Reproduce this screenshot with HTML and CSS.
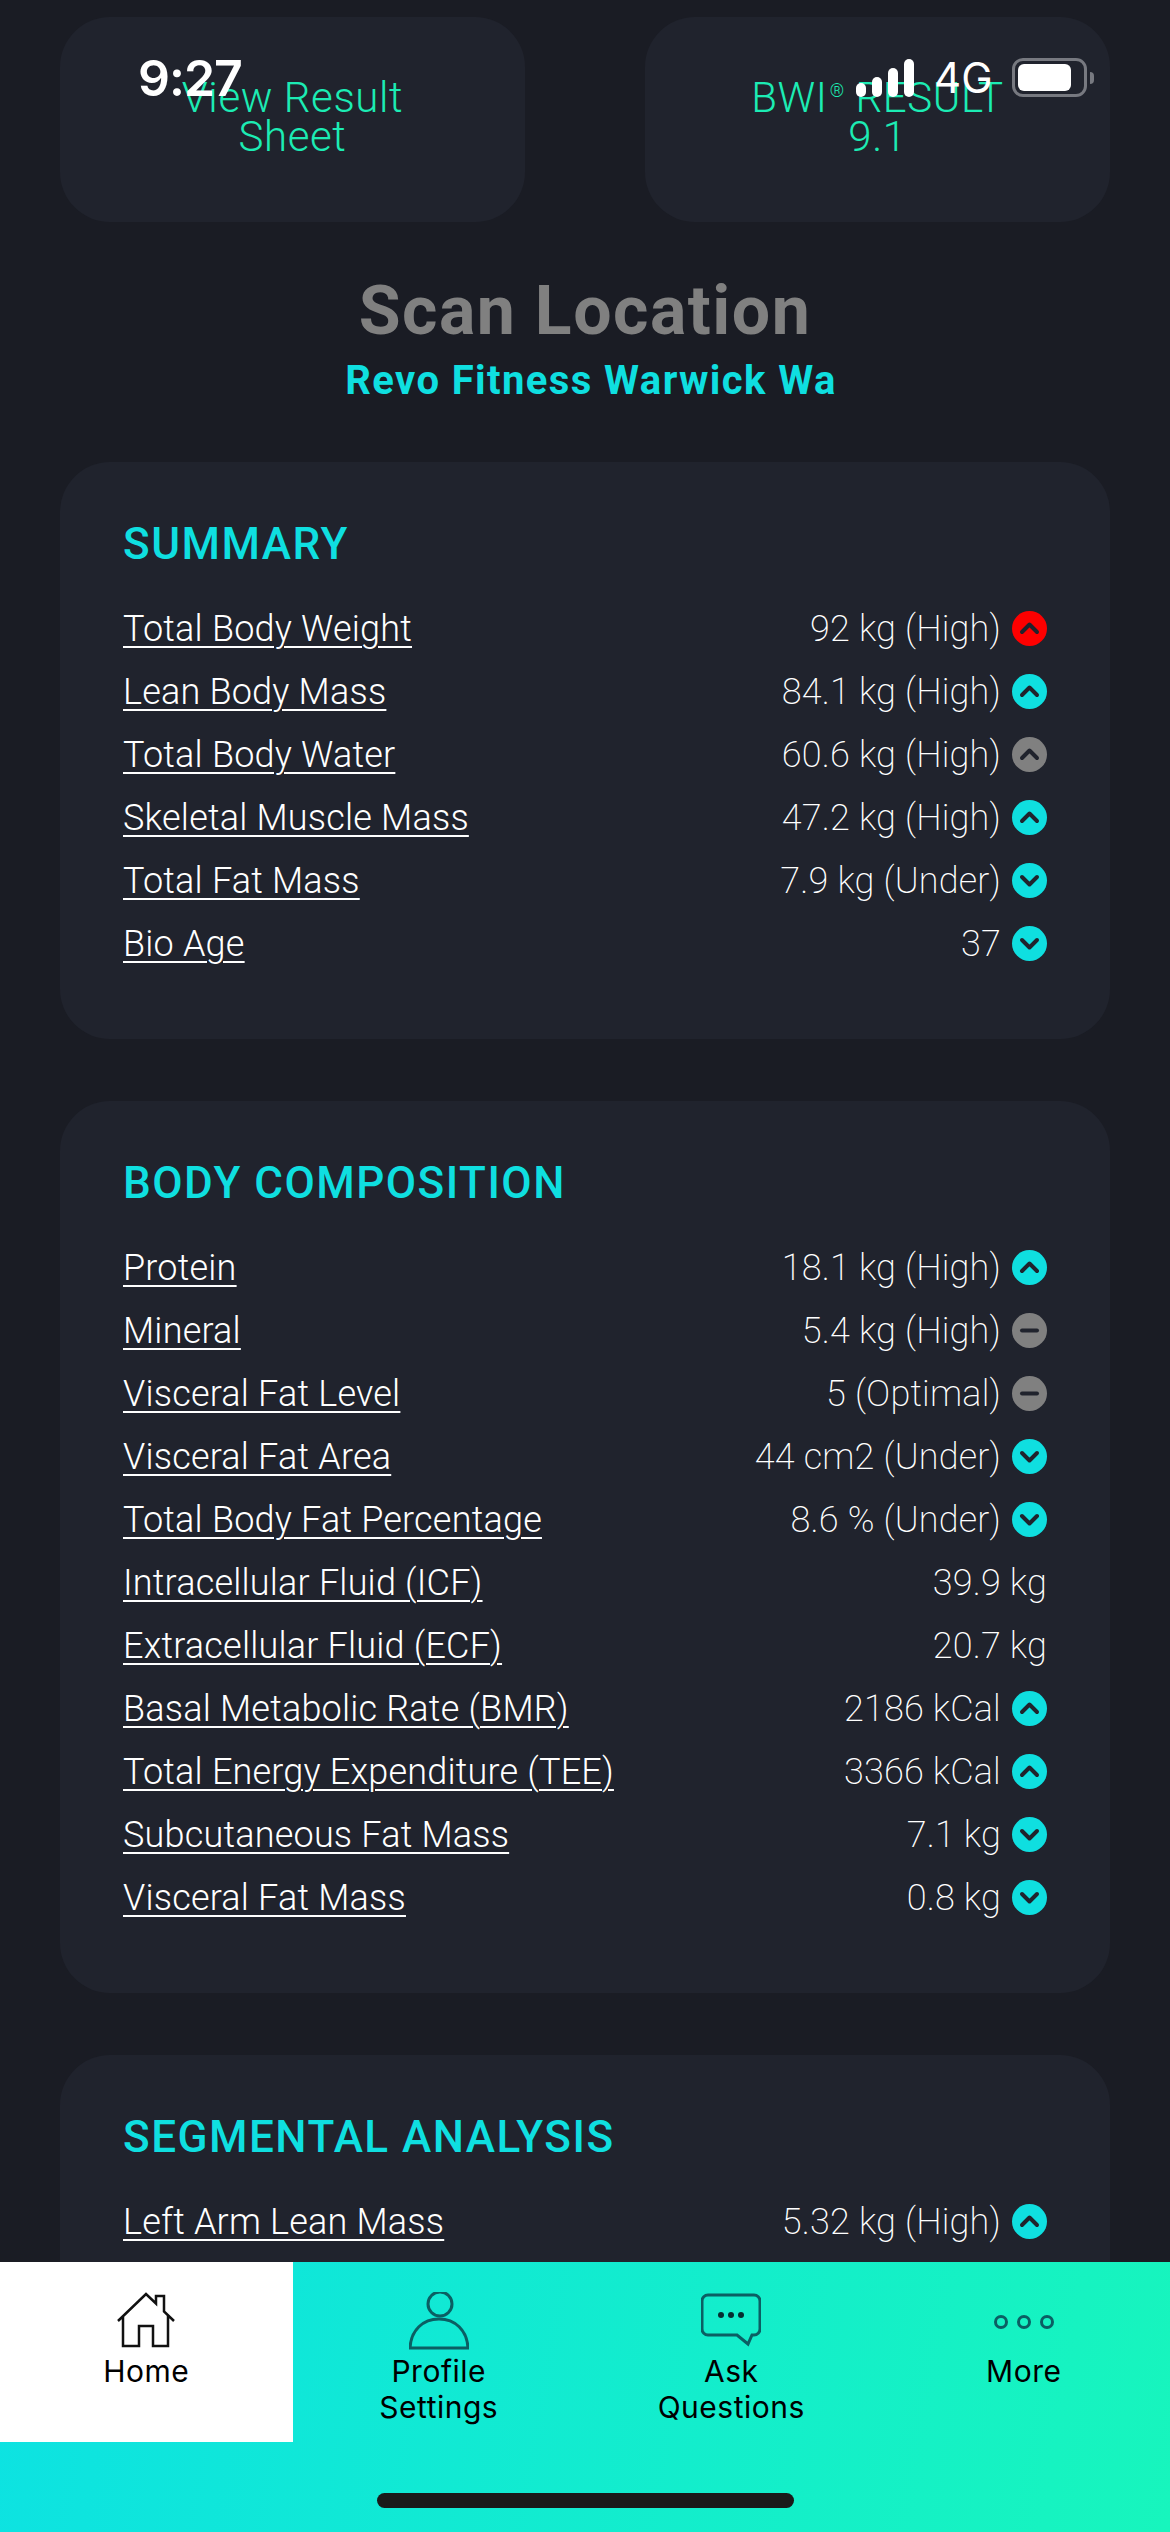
FILE: index.html
```html
<!DOCTYPE html>
<html lang="en">
<head>
    <meta charset="UTF-8">
    <meta name="viewport" content="width=device-width, initial-scale=1.0">
    <title>Scan Result</title>
    <link rel="stylesheet" href="styles.css">
</head>
<body>

<svg class="sprite" aria-hidden="true">
    <symbol id="up" viewBox="0 0 35 35"><path d="M10 21 L17.5 13.5 L25 21"/></symbol>
    <symbol id="down" viewBox="0 0 35 35"><path d="M10 14 L17.5 21.5 L25 14"/></symbol>
    <symbol id="flat" viewBox="0 0 35 35"><path d="M10 17.5 H25"/></symbol>
</svg>

<div class="status-bar">
    <span class="clock">9:27</span>
    <div class="status-icons">
        <div class="signal">
            <i class="bar-1"></i><i class="bar-2"></i><i class="bar-3"></i><i class="bar-4"></i>
        </div>
        <span class="network">4G</span>
        <div class="battery"><i></i></div>
        <div class="battery-nub"></div>
    </div>
</div>

<main class="page">
    <div class="top-cards">
        <a class="top-card">View Result<br>Sheet</a>
        <a class="top-card">BWI<sup>®</sup> RESULT<br>9.1</a>
    </div>

    <h1 class="scan-title">Scan Location</h1>
    <p class="scan-place">Revo Fitness Warwick Wa</p>

    <section class="card">
        <h2>SUMMARY</h2>
        <div class="row"><a>Total Body Weight</a><span class="value">92 kg (High)<svg class="badge red"><use href="#up"/></svg></span></div>
        <div class="row"><a>Lean Body Mass</a><span class="value">84.1 kg (High)<svg class="badge cyan"><use href="#up"/></svg></span></div>
        <div class="row"><a>Total Body Water</a><span class="value">60.6 kg (High)<svg class="badge grey"><use href="#up"/></svg></span></div>
        <div class="row"><a>Skeletal Muscle Mass</a><span class="value">47.2 kg (High)<svg class="badge cyan"><use href="#up"/></svg></span></div>
        <div class="row"><a>Total Fat Mass</a><span class="value">7.9 kg (Under)<svg class="badge cyan"><use href="#down"/></svg></span></div>
        <div class="row"><a>Bio Age</a><span class="value">37<svg class="badge cyan"><use href="#down"/></svg></span></div>
    </section>

    <section class="card">
        <h2>BODY COMPOSITION</h2>
        <div class="row"><a>Protein</a><span class="value">18.1 kg (High)<svg class="badge cyan"><use href="#up"/></svg></span></div>
        <div class="row"><a>Mineral</a><span class="value">5.4 kg (High)<svg class="badge grey"><use href="#flat"/></svg></span></div>
        <div class="row"><a>Visceral Fat Level</a><span class="value">5 (Optimal)<svg class="badge grey"><use href="#flat"/></svg></span></div>
        <div class="row"><a>Visceral Fat Area</a><span class="value">44 cm2 (Under)<svg class="badge cyan"><use href="#down"/></svg></span></div>
        <div class="row"><a>Total Body Fat Percentage</a><span class="value">8.6 % (Under)<svg class="badge cyan"><use href="#down"/></svg></span></div>
        <div class="row"><a>Intracellular Fluid (ICF)</a><span class="value">39.9 kg</span></div>
        <div class="row"><a>Extracellular Fluid (ECF)</a><span class="value">20.7 kg</span></div>
        <div class="row"><a>Basal Metabolic Rate (BMR)</a><span class="value">2186 kCal<svg class="badge cyan"><use href="#up"/></svg></span></div>
        <div class="row"><a>Total Energy Expenditure (TEE)</a><span class="value">3366 kCal<svg class="badge cyan"><use href="#up"/></svg></span></div>
        <div class="row"><a>Subcutaneous Fat Mass</a><span class="value">7.1 kg<svg class="badge cyan"><use href="#down"/></svg></span></div>
        <div class="row"><a>Visceral Fat Mass</a><span class="value">0.8 kg<svg class="badge cyan"><use href="#down"/></svg></span></div>
    </section>

    <section class="card">
        <h2>SEGMENTAL ANALYSIS</h2>
        <div class="row"><a>Left Arm Lean Mass</a><span class="value">5.32 kg (High)<svg class="badge cyan"><use href="#up"/></svg></span></div>
    </section>
</main>

<nav class="tab-bar">
    <div class="tabs">
        <a class="tab active">
            <svg class="tab-icon house" viewBox="0 0 60 58"><path d="M2 29 L30 2 L40 11.5 V4 H48 V19.5 L58 29 M7 24 V54 H23 V34 H37 V54 H52 V24"/></svg>
            Home
        </a>
        <a class="tab">
            <svg class="tab-icon" viewBox="0 0 60 58"><circle cx="31" cy="12" r="12"/><path d="M1 56 C2 38 14 27 30 27 C46 27 58 38 59 56 Z"/></svg>
            Profile<br>Settings
        </a>
        <a class="tab">
            <svg class="tab-icon" viewBox="0 0 60 58"><path d="M7 3 H53 a6 6 0 0 1 6 6 V37 a6 6 0 0 1 -6 6 H51 L47 52 L36 43 H7 a6 6 0 0 1 -6 -6 V9 a6 6 0 0 1 6 -6 Z"/><circle class="dot" cx="20" cy="23" r="3"/><circle class="dot" cx="30" cy="23" r="3"/><circle class="dot" cx="40" cy="23" r="3"/></svg>
            Ask<br>Questions
        </a>
        <a class="tab">
            <svg class="tab-icon" viewBox="0 0 60 58"><circle cx="7" cy="30" r="5.5"/><circle cx="30" cy="30" r="5.5"/><circle cx="53" cy="30" r="5.5"/></svg>
            More
        </a>
    </div>
    <div class="home-indicator"></div>
</nav>

</body>
</html>
```

FILE: styles.css
```css
html, body {
    margin: 0;
    height: 2532px;
    overflow: hidden;
}

body {
    position: relative;
    background-color: #1a1c24;
    font-family: Roboto, "Liberation Sans", sans-serif;
    color: #fff;
}

.sprite {
    display: none;
}

/* status bar sits over the scrolled content */
.status-bar {
    position: absolute;
    top: 0;
    left: 0;
    right: 0;
    height: 110px;
    z-index: 5;
}

.clock {
    position: absolute;
    left: 138px;
    top: 50px;
    font-family: Inter, sans-serif;
    font-size: 50px;
    line-height: 56px;
    font-weight: 600;
    letter-spacing: -1px;
}

.status-icons {
    position: absolute;
    left: 856px;
    top: 58px;
    display: flex;
    align-items: center;
    height: 39px;
}

.signal {
    display: flex;
    align-items: flex-end;
    gap: 6px;
    height: 38px;
}

.signal i {
    display: block;
    width: 10px;
    background-color: #fff;
    border-radius: 5px;
}

.bar-1 { height: 14px; }
.bar-2 { height: 20px; }
.bar-3 { height: 29px; }
.bar-4 { height: 38px; }

.network {
    margin-left: 20px;
    font-family: Inter, sans-serif;
    font-size: 42px;
    line-height: 39px;
    font-weight: 400;
}

.battery {
    box-sizing: border-box;
    width: 75px;
    height: 39px;
    margin-left: 20px;
    padding: 3px 13px 3px 3px;
    border: 3px solid #777980;
    border-radius: 11px;
}

.battery i {
    display: block;
    height: 100%;
    background-color: #fff;
    border-radius: 6px;
}

.battery-nub {
    width: 4px;
    height: 12px;
    margin-left: 3px;
    background-color: #777980;
    border-radius: 0 4px 4px 0;
}

/* main column */
.page {
    padding: 17px 60px 0;
}

.top-cards {
    display: flex;
    justify-content: space-between;
}

.top-card {
    box-sizing: border-box;
    width: 465px;
    height: 205px;
    padding-top: 61px;
    background-color: #20232d;
    border-radius: 50px;
    color: #1cecb4;
    font-size: 42px;
    font-weight: 300;
    letter-spacing: 0.6px;
    line-height: 39px;
    text-align: center;
}

.top-card sup {
    font-size: 18px;
    line-height: 0;
    margin-left: 2px;
}

.scan-title {
    margin: 51px 0 0;
    color: #808080;
    font-size: 68px;
    line-height: 76px;
    font-weight: 700;
    letter-spacing: 1.5px;
    text-align: center;
}

.scan-place {
    margin: 7px 0 56px;
    padding-left: 12px;
    color: #0fdfe0;
    font-size: 40px;
    line-height: 50px;
    font-weight: 700;
    letter-spacing: 1.4px;
    text-align: center;
}

.card {
    padding: 56px 63px 64px;
    margin-bottom: 62px;
    background-color: #20232d;
    border-radius: 50px;
}

.card h2 {
    margin: 0 0 27px;
    color: #0fdfe0;
    font-size: 44px;
    line-height: 52px;
    font-weight: 500;
    letter-spacing: 1.5px;
}

.row {
    display: flex;
    justify-content: space-between;
    align-items: center;
    height: 63px;
    font-size: 36px;
    font-weight: 300;
}

.row a {
    letter-spacing: 0.2px;
    text-decoration: underline;
    text-decoration-thickness: 2px;
    text-underline-offset: 5px;
}

.value {
    display: flex;
    align-items: center;
    color: #fff;
    font-weight: 200;
    letter-spacing: 0.2px;
}

.badge {
    width: 35px;
    height: 35px;
    margin-left: 11px;
    border-radius: 50%;
    fill: none;
    stroke: #20232d;
    stroke-width: 4;
    stroke-linecap: round;
    stroke-linejoin: round;
}

.red { background-color: #fe0000; }
.cyan { background-color: #0fdfe0; }
.grey { background-color: #808080; }

/* bottom tab bar covers the end of the scroll area */
.tab-bar {
    position: absolute;
    left: 0;
    right: 0;
    bottom: 0;
    height: 270px;
    background: linear-gradient(100deg, #0de2e2 0%, #17f5bd 100%);
    z-index: 4;
}

.tabs {
    display: flex;
}

.tab {
    box-sizing: border-box;
    flex: 1;
    height: 180px;
    padding-top: 30px;
    color: #000;
    font-family: Inter, sans-serif;
    font-size: 30px;
    letter-spacing: 0.5px;
    line-height: 36px;
    text-align: center;
}

.tab.active {
    background-color: #fff;
}

.tab-icon {
    display: block;
    width: 60px;
    height: 58px;
    margin: 0 auto 3px;
    fill: none;
    stroke: #0b5f63;
    stroke-width: 3;
}

.tab-icon .dot {
    fill: #062e30;
    stroke: none;
}

.house {
    stroke: #111;
    stroke-width: 2.5;
}

.home-indicator {
    width: 417px;
    height: 15px;
    margin: 51px auto 0;
    background-color: #1a1a1a;
    border-radius: 8px;
}
```
